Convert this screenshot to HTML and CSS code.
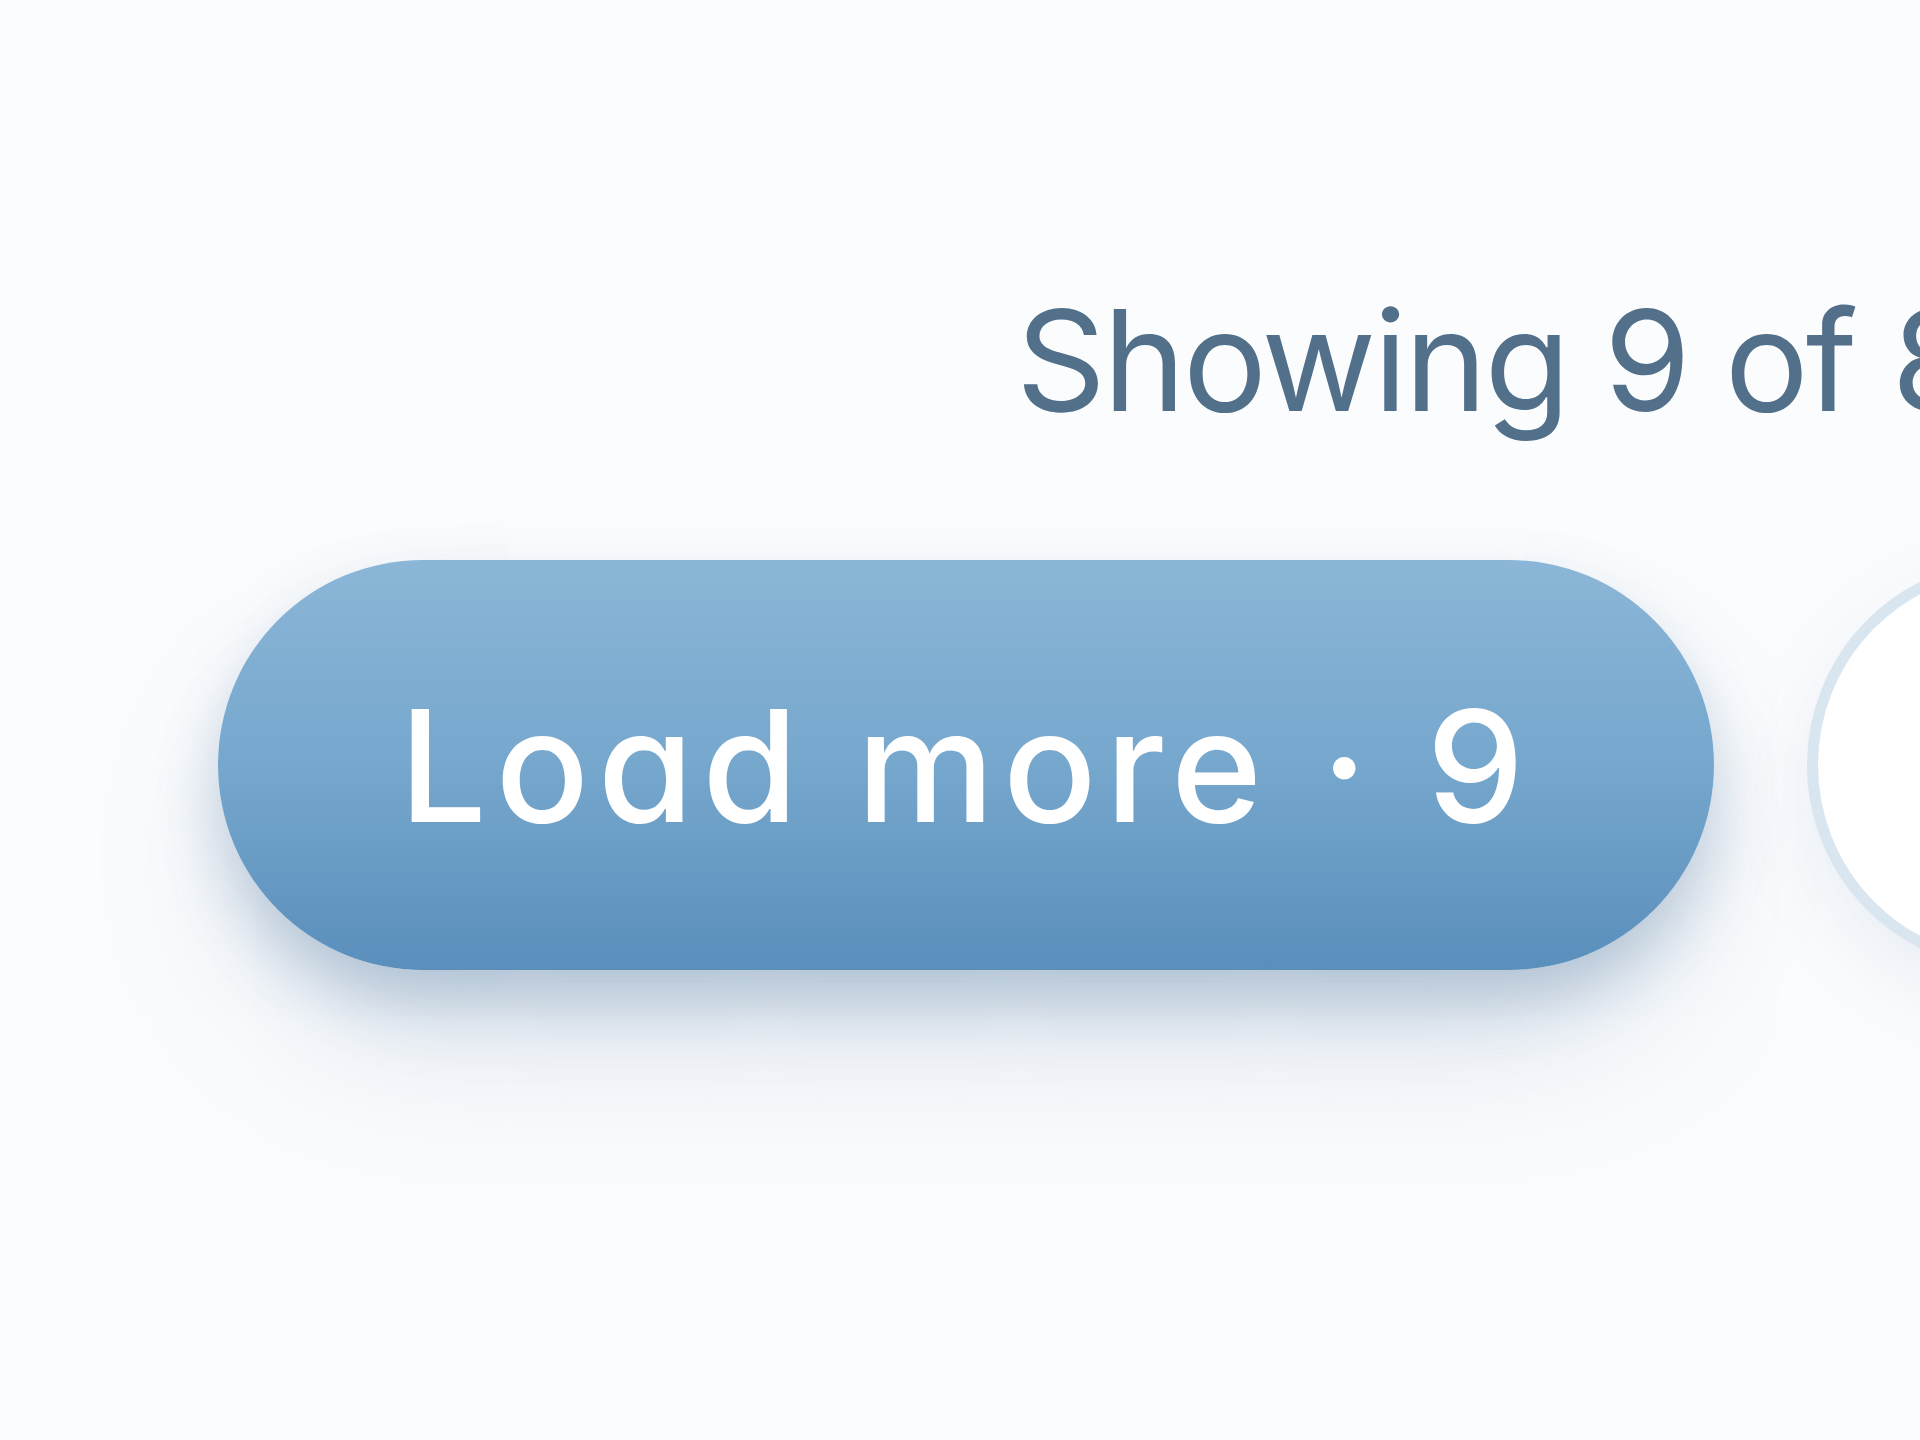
FILE: index.html
```html
<!DOCTYPE html>
<html lang="en">
<head>
<meta charset="utf-8">
<title>Load more</title>
<link rel="stylesheet" href="styles.css">
</head>
<body>
  <div class="pager">
    <p class="status">Showing 9 of 84</p>
    <div class="actions">
      <button class="load-more" type="button">Load more · 9</button>
      <button class="to-top" type="button" aria-label="Back to top">
        <svg viewBox="0 0 24 24" width="120" height="120" fill="none" stroke="#5a8fbc" stroke-width="2" stroke-linecap="round" stroke-linejoin="round"><path d="M12 19V5M5 12l7-7 7 7"/></svg>
      </button>
    </div>
  </div>
</body>
</html>
```
FILE: styles.css
```css
html, body {
  margin: 0;
  padding: 0;
}
body {
  background: #fbfcfe;
  width: 1920px;
  height: 1440px;
  overflow: hidden;
  font-family: Inter, "Noto Sans", sans-serif;
  font-feature-settings: "cv11" 1;
}
.pager {
  display: flex;
  flex-direction: column;
  align-items: flex-start;
  padding: 290px 0 0 218px;
  width: 2400px;
}
.status {
  margin: 0 0 130px 798px;
  font-size: 140px;
  line-height: 1;
  font-weight: 400;
  color: #52708a;
  letter-spacing: -0.02em;
  white-space: nowrap;
}
.actions {
  display: flex;
  align-items: center;
  gap: 93px;
}
.load-more {
  flex: none;
  width: 1496px;
  height: 410px;
  border: 0;
  border-radius: 205px;
  background: linear-gradient(180deg, #8bb6d7 0%, #76a7cd 50%, #5a8fbc 100%);
  color: #ffffff;
  font-family: inherit;
  font-feature-settings: "cv11" 1;
  font-size: 155px;
  font-weight: 500;
  letter-spacing: 0.056em;
  line-height: 1;
  display: flex;
  align-items: center;
  justify-content: center;
  white-space: nowrap;
  box-shadow: 0 30px 60px rgba(70, 110, 150, 0.28), 0 90px 160px -30px rgba(70, 110, 150, 0.22);
}
.to-top {
  flex: none;
  width: 410px;
  height: 410px;
  border-radius: 50%;
  border: 11px solid #d9e6f0;
  background: #ffffff;
  display: flex;
  align-items: center;
  justify-content: center;
  box-shadow: 0 30px 80px rgba(70, 110, 150, 0.10);
  box-sizing: border-box;
}
```
